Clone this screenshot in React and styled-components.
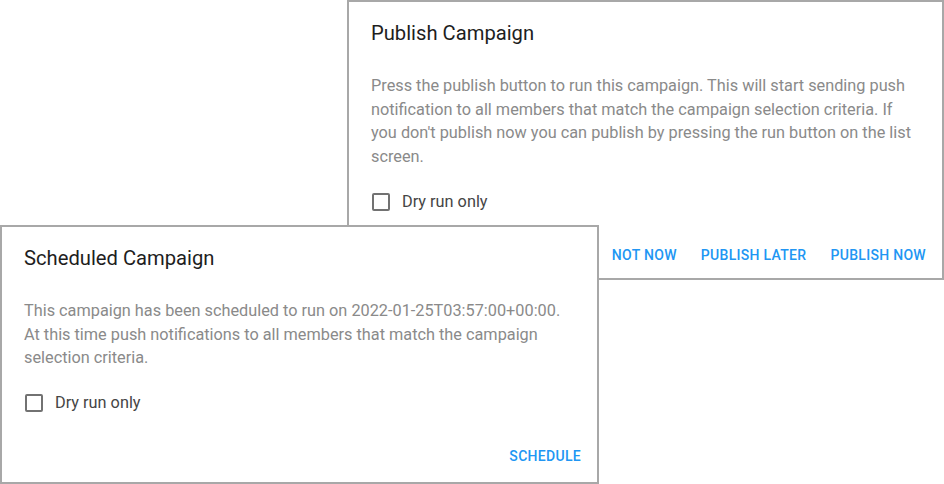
import React from 'react'
import styled, { createGlobalStyle } from 'styled-components'

const GlobalStyle = createGlobalStyle`
    html, body {
        margin: 0;
        padding: 0;
        background: #fff;
        font-family: Roboto, "Liberation Sans", Arial, sans-serif;
    }
`

function Dialog({ title, lines, actions, left, top, width, height }) {
    return (
        <StyledDialog $left={left} $top={top} $width={width} $height={height}>
            <Title>{title}</Title>
            <Content>
                <Text>
                    {lines.map((l, i) => (
                        <React.Fragment key={i}>
                            {l}
                            {i < lines.length - 1 && <br />}
                        </React.Fragment>
                    ))}
                </Text>
                <CheckRow>
                    <CheckArea>
                        <CheckBox />
                    </CheckArea>
                    <CheckLabel>Dry run only</CheckLabel>
                </CheckRow>
            </Content>
            <Actions>
                {actions.map((a) => (
                    <Button key={a}>{a}</Button>
                ))}
            </Actions>
        </StyledDialog>
    )
}

export default function App() {
    return (
        <Canvas>
            <GlobalStyle />
            <Dialog
                left={347}
                top={0}
                width={597}
                height={280}
                title="Publish Campaign"
                lines={[
                    'Press the publish button to run this campaign. This will start sending push',
                    'notification to all members that match the campaign selection criteria. If',
                    "you don't publish now you can publish by pressing the run button on the list",
                    'screen.',
                ]}
                actions={['Not now', 'Publish later', 'Publish now']}
            />
            <Dialog
                left={0}
                top={225}
                width={599}
                height={259}
                title="Scheduled Campaign"
                lines={[
                    'This campaign has been scheduled to run on 2022-01-25T03:57:00+00:00.',
                    'At this time push notifications to all members that match the campaign',
                    'selection criteria.',
                ]}
                actions={['Schedule']}
            />
        </Canvas>
    )
}

const Canvas = styled.div`
    position: relative;
    width: 944px;
    height: 484px;
    overflow: hidden;
    background: #fff;
`

const StyledDialog = styled.div`
    position: absolute;
    left: ${(p) => p.$left}px;
    top: ${(p) => p.$top}px;
    width: ${(p) => p.$width}px;
    height: ${(p) => p.$height}px;
    box-sizing: border-box;
    border: 2px solid #a8a8a8;
    background: #fff;
    display: flex;
    flex-direction: column;
`

const Title = styled.h2`
    margin: 0;
    padding: 15px 22px 16px;
    font-size: 20.2px;
    font-weight: 400;
    line-height: 32px;
    color: #1e1e1e;
`

const Content = styled.div`
    padding: 9px 22px 0;
`

const Text = styled.p`
    margin: 0 0 12px;
    font-size: 16.3px;
    line-height: 23.7px;
    color: #8a8a8a;
    white-space: nowrap;
`

const CheckRow = styled.label`
    display: flex;
    align-items: center;
    height: 42px;
    margin-left: -11px;
`

const CheckArea = styled.span`
    width: 42px;
    height: 42px;
    display: flex;
    align-items: center;
    justify-content: center;
`

const CheckBox = styled.span`
    width: 14px;
    height: 14px;
    border: 2px solid #727272;
    border-radius: 2px;
`

const CheckLabel = styled.span`
    font-size: 16.3px;
    color: #454545;
    line-height: 24px;
`

const Actions = styled.div`
    display: flex;
    justify-content: flex-end;
    gap: 8px;
    padding: 14px 8px 0;
`

const Button = styled.button`
    height: 36px;
    min-width: 64px;
    padding: 6px 8px;
    border: none;
    background: transparent;
    font-family: Roboto, "Liberation Sans", Arial, sans-serif;
    font-size: 14px;
    font-weight: 500;
    letter-spacing: 0.3px;
    text-transform: uppercase;
    color: #2196f3;
    cursor: pointer;
`
